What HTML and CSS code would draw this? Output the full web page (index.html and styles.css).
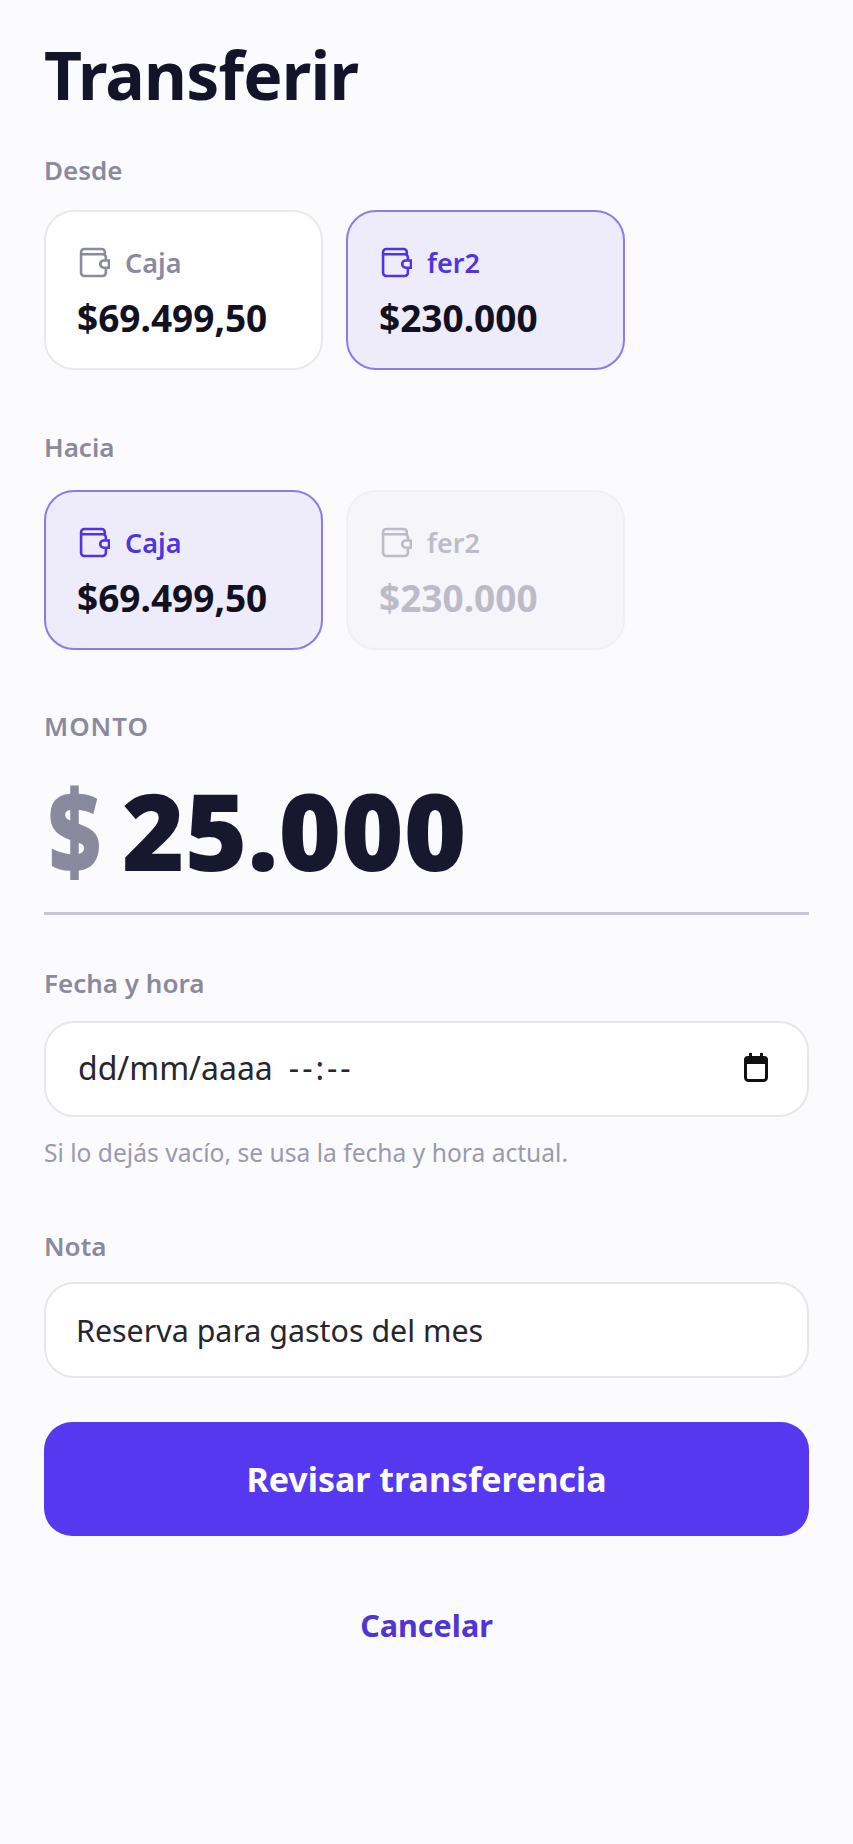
FILE: index.html
```html
<!DOCTYPE html>
<html lang="es">
<head>
    <meta charset="UTF-8">
    <meta name="viewport" content="width=device-width, initial-scale=1.0">
    <title>Transferir</title>
    <link rel="stylesheet" href="styles.css">
</head>
<body>
    <main class="page">
        <h1 class="title">Transferir</h1>

        <div class="label label-desde">Desde</div>
        <div class="accounts">
            <button class="account">
                <span class="account-head">
                    <svg class="wallet" viewBox="0 0 30 30"><path d="M25 7V5a3 3 0 0 0-3-3H5a3 3 0 0 0-3 3v20a3 3 0 0 0 3 3h18a3 3 0 0 0 3-3v-5M2 7h21a3 3 0 0 1 3 3v3"/><path d="M29 13h-5a3.500 3.500 0 0 0 0 7h5z"/></svg>
                    Caja
                </span>
                <span class="account-amount">$69.499,50</span>
            </button>
            <button class="account selected">
                <span class="account-head">
                    <svg class="wallet" viewBox="0 0 30 30"><path d="M25 7V5a3 3 0 0 0-3-3H5a3 3 0 0 0-3 3v20a3 3 0 0 0 3 3h18a3 3 0 0 0 3-3v-5M2 7h21a3 3 0 0 1 3 3v3"/><path d="M29 13h-5a3.500 3.500 0 0 0 0 7h5z"/></svg>
                    fer2
                </span>
                <span class="account-amount">$230.000</span>
            </button>
        </div>

        <div class="label label-hacia">Hacia</div>
        <div class="accounts">
            <button class="account selected">
                <span class="account-head">
                    <svg class="wallet" viewBox="0 0 30 30"><path d="M25 7V5a3 3 0 0 0-3-3H5a3 3 0 0 0-3 3v20a3 3 0 0 0 3 3h18a3 3 0 0 0 3-3v-5M2 7h21a3 3 0 0 1 3 3v3"/><path d="M29 13h-5a3.500 3.500 0 0 0 0 7h5z"/></svg>
                    Caja
                </span>
                <span class="account-amount">$69.499,50</span>
            </button>
            <button class="account disabled">
                <span class="account-head">
                    <svg class="wallet" viewBox="0 0 30 30"><path d="M25 7V5a3 3 0 0 0-3-3H5a3 3 0 0 0-3 3v20a3 3 0 0 0 3 3h18a3 3 0 0 0 3-3v-5M2 7h21a3 3 0 0 1 3 3v3"/><path d="M29 13h-5a3.500 3.500 0 0 0 0 7h5z"/></svg>
                    fer2
                </span>
                <span class="account-amount">$230.000</span>
            </button>
        </div>

        <div class="label label-monto">MONTO</div>
        <div class="amount">
            <span class="amount-sign">$</span>
            <span class="amount-value">25.000</span>
        </div>

        <div class="label label-fecha">Fecha y hora</div>
        <div class="field field-date">
            <span class="date-text">dd/mm/aaaa</span>
            <span class="time-text">--:--</span>
            <svg class="calendar" viewBox="0 0 24 29"><path class="calendar-top" d="M5 0h3v3h8V0h3v3h1a4 4 0 0 1 4 4v4H0V7a4 4 0 0 1 4-4h1z"/><rect class="calendar-body" x="1.500" y="5" width="21" height="22.500" rx="3"/></svg>
        </div>
        <div class="hint">Si lo dejás vacío, se usa la fecha y hora actual.</div>

        <div class="label label-nota">Nota</div>
        <div class="field field-note">Reserva para gastos del mes</div>

        <button class="submit">Revisar transferencia</button>
        <button class="cancel">Cancelar</button>
    </main>
</body>
</html>
```

FILE: styles.css
```css
* {
    box-sizing: border-box;
}

body {
    margin: 0;
    font-family: "Noto Sans", "Open Sans", sans-serif;
    background-color: #fbfbfd;
    color: #1a1a2e;
    min-height: 1844px;
}

button {
    font-family: inherit;
    padding: 0;
    border: none;
    background: none;
    cursor: pointer;
}

.page {
    display: flex;
    flex-direction: column;
    padding: 29px 44px 0;
}

.title {
    margin: 0;
    font-size: 66px;
    font-weight: 700;
    line-height: 90px;
    letter-spacing: -0.8px;
    color: #13132a;
}

.label {
    font-size: 26px;
    font-weight: 600;
    line-height: 34px;
    color: #8a8a9e;
}

.label-desde {
    margin-top: 34px;
    margin-bottom: -1px;
}

.label-hacia {
    margin-top: 60px;
    margin-bottom: 2px;
}

.label-monto {
    margin-top: 59px;
    letter-spacing: 1px;
}

.label-fecha {
    margin-top: 51px;
}

.label-nota {
    margin-top: 60.5px;
}

.accounts {
    display: flex;
    gap: 23px;
    margin-top: 24px;
}

.account {
    display: flex;
    flex-direction: column;
    width: 279px;
    height: 160px;
    padding: 33.5px 31px 0;
    background-color: #fff;
    border: 2px solid #e8e8ee;
    border-radius: 30px;
    text-align: left;
}

.account-head {
    display: flex;
    align-items: center;
    gap: 15px;
    font-size: 27px;
    font-weight: 600;
    line-height: 34px;
    color: #8a8a9e;
}

.wallet {
    width: 31px;
    height: 31px;
    margin-left: 2px;
    fill: none;
    stroke: currentColor;
    stroke-width: 2.5;
}

.account-amount {
    margin-top: 15px;
    font-size: 37px;
    font-weight: 700;
    line-height: 46px;
    color: #111122;
}

.account.selected {
    background-color: #eeebfb;
    border-color: #8c7be6;
}

.account.selected .account-head {
    color: #4f35e0;
}

.account.disabled {
    background-color: #f6f5fa;
    border-color: #f0eff5;
}

.account.disabled .account-head,
.account.disabled .account-amount {
    color: #bcbcc8;
}

.amount {
    display: flex;
    align-items: baseline;
    gap: 21px;
    height: 150px;
    margin-top: 22px;
    padding-left: 4px;
    border-bottom: 3px solid #c9c7d6;
    line-height: 130px;
    font-weight: 900;
}

.amount-sign {
    display: inline-block;
    font-size: 92px;
    color: #8a8a9e;
    transform: translateY(-7px) scaleY(1.25);
}

.amount-value {
    font-size: 107px;
    color: #17172e;
}

.field {
    display: flex;
    align-items: center;
    height: 96px;
    margin-top: 19px;
    background-color: #fff;
    border: 2px solid #e6e6ec;
    border-radius: 30px;
    color: #26262f;
}

.field-date {
    margin-top: 21px;
    padding: 0 39px 4px 32px;
    font-size: 32px;
}

.time-text {
    margin-left: 16px;
    letter-spacing: 3px;
}

.calendar {
    width: 24px;
    height: 29px;
    margin-left: auto;
    margin-top: 1px;
}

.calendar-top {
    fill: #111;
}

.calendar-body {
    fill: none;
    stroke: #111;
    stroke-width: 3;
}

.field-note {
    padding-left: 30px;
    font-size: 30.4px;
}

.hint {
    margin-top: 19.5px;
    font-size: 24.6px;
    line-height: 32px;
    color: #9a9aac;
}

.submit {
    height: 114px;
    margin-top: 44px;
    background-color: #5538f0;
    border-radius: 28px;
    font-size: 34px;
    font-weight: 700;
    color: #fff;
}

.cancel {
    margin-top: 69px;
    font-size: 30.5px;
    font-weight: 700;
    line-height: 40px;
    color: #4f35d6;
}
```
